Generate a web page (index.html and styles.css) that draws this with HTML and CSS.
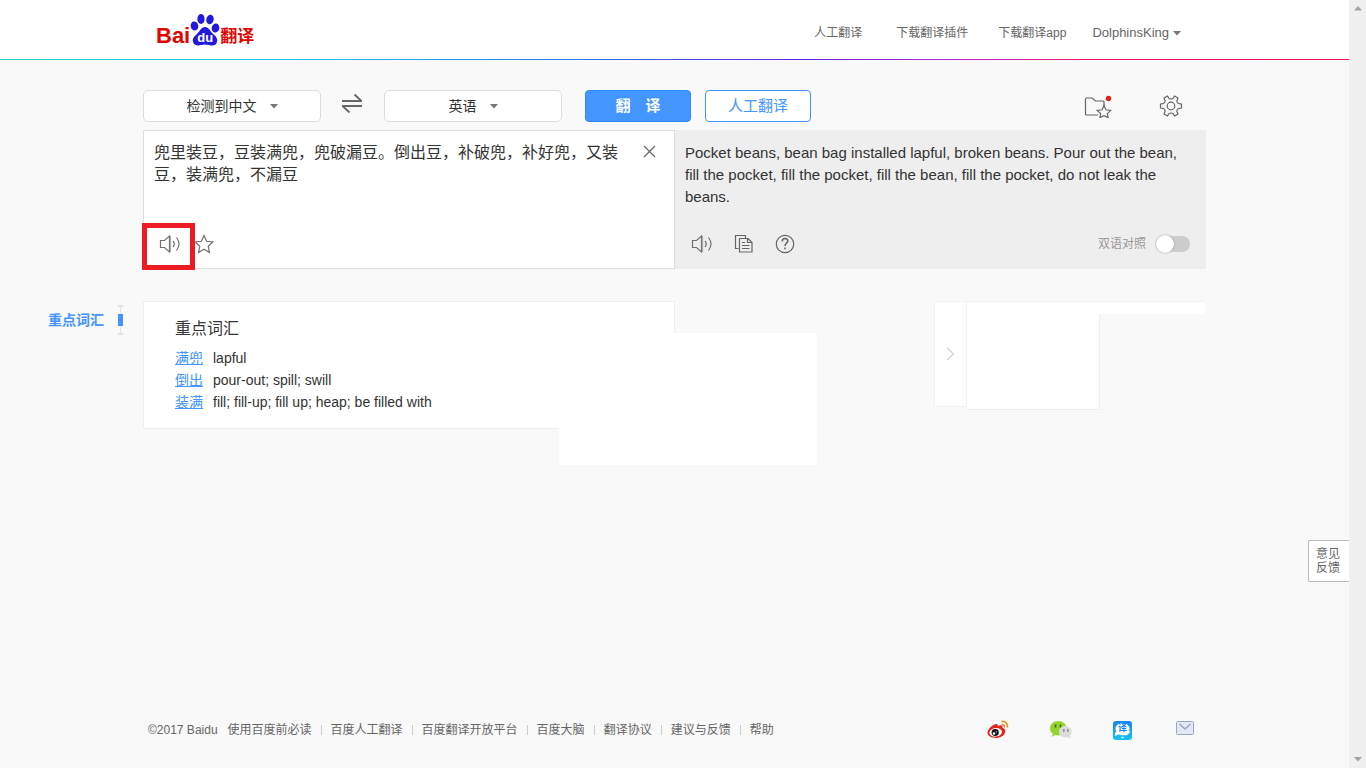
FILE: index.html
```html
<!DOCTYPE html>
<html lang="zh-CN">
<head>
<meta charset="utf-8">
<title>百度翻译</title>
<link rel="stylesheet" href="styles.css">
</head>
<body>
<div class="window">
  <div class="page">
    <header class="header">
      <div class="header-inner">
        <a class="logo" href="#" aria-label="Baidu翻译">
          <span class="logo-bai">Bai</span>
          <span class="logo-paw">
            <svg width="30" height="32" viewBox="0 0 30 32" fill="#2319dc"><ellipse cx="4.5" cy="12" rx="3.8" ry="4.5" transform="rotate(-12 4.500 12)"/><ellipse cx="11" cy="5" rx="3.6" ry="5"/><ellipse cx="20" cy="5.500" rx="3.700" ry="4.800" transform="rotate(12 20 5.500)"/><ellipse cx="25.500" cy="14" rx="3.800" ry="4.500" transform="rotate(10 25.500 14)"/><path d="M15 13c4 0 5 4 8 7 3 2 5 5 4 8-1 4-5 4-8 3-3-.7-5-.7-8 0-3 .8-7 .6-8-3-1-4 2-6 4-8 3-3 4-7 8-7z"/></svg>
            <span class="logo-du">du</span>
          </span>
          <span class="logo-cn">翻译</span>
        </a>
        <nav class="nav">
          <a class="nav-human" href="#">人工翻译</a>
          <a class="nav-plugin" href="#">下载翻译插件</a>
          <a class="nav-app" href="#">下载翻译app</a>
          <a class="nav-user" href="#">DolphinsKing <svg class="caret" width="8" height="5" viewBox="0 0 8 5"><path d="M0 0h8L4 4.500z"/></svg></a>
        </nav>
      </div>
    </header>

    <main class="main">
      <div class="toolbar">
        <label class="lang"><select aria-label="源语言"><option>检测到中文</option></select><svg class="caret" width="8" height="5" viewBox="0 0 8 5"><path d="M0 0h8L4 4.500z"/></svg></label>
        <button class="icon-btn swap" aria-label="交换语言"><svg width="22" height="20" viewBox="0 0 22 20" fill="none" stroke="#666" stroke-width="1.800"><path d="M1 8h20M13.500 1.500l7 6.500M1 13h20M8.500 19.500l-7-6.500"/></svg></button>
        <label class="lang"><select aria-label="目标语言"><option>英语</option></select><svg class="caret" width="8" height="5" viewBox="0 0 8 5"><path d="M0 0h8L4 4.500z"/></svg></label>
        <button class="btn btn-primary">翻　译</button>
        <button class="btn btn-outline">人工翻译</button>
        <div class="tools">
          <button class="icon-btn" aria-label="收藏夹"><svg width="28" height="24" viewBox="0 0 28 24" fill="none" stroke="#666" stroke-width="1.200"><path d="M14 21H2.500Q1.500 21 1.500 20V5Q1.500 4 2.500 4H8l3.500 3H19q1 0 1 1v4"/><path d="M20 11.500l2 4.300 4.800.6-3.500 3.200.9 4-4.200-2-4.200 2 .9-4-3.500-3.200 4.800-.6z" fill="#f9f9f9"/><circle cx="24.500" cy="4.500" r="2.700" fill="#e4211f" stroke="none"/></svg></button>
          <button class="icon-btn" aria-label="设置"><svg width="24" height="24" viewBox="0 0 24 24" fill="none" stroke="#666" stroke-width="1.200" stroke-linejoin="round"><circle cx="12" cy="12" r="3.800"/><path d="M10 4.500Q12 5.500 14 4.500L15.500 2l3.500 2-1.200 3Q18 9 20 9.700l2.500.3v4l-2.500.3Q18 15 17.800 17l1.200 3-3.500 2-1.500-2.500Q12 18.500 10 19.500L8.500 22 5 20l1.200-3Q6 15 4 14.300L1.500 14v-4L4 9.700Q6 9 6.200 7L5 4l3.500-2z"/></svg></button>
        </div>
      </div>

      <div class="panels">
        <section class="source">
          <div class="source-top">
            <textarea class="source-text" aria-label="原文" spellcheck="false">兜里装豆，豆装满兜，兜破漏豆。倒出豆，补破兜，补好兜，又装豆，装满兜，不漏豆</textarea>
            <button class="icon-btn close" aria-label="清空"><svg width="13" height="13" viewBox="0 0 13 13" stroke="#666" stroke-width="1.200"><path d="M1 1l11 11M12 1L1 12"/></svg></button>
          </div>
          <div class="actions">
            <button class="icon-btn marked" aria-label="朗读原文"><svg width="22" height="20" viewBox="0 0 22 20" fill="none" stroke="#707070" stroke-width="1.200"><path d="M1.500 6.500h4l5-4.500v16l-5-4.500h-4z"/><path d="M11.500 2v16" stroke="#aaa"/><path d="M14 7q2.500 3 0 6M17.500 3.500q5 6.500 0 13"/></svg></button>
            <button class="icon-btn star" aria-label="收藏"><svg width="20" height="20" viewBox="0 0 20 20" fill="none" stroke="#707070" stroke-width="1.200"><path d="M10 1.500l2.600 5.800 6.200.7-4.600 4.200 1.300 6.300-5.500-3.200-5.500 3.200 1.300-6.300L1.200 8l6.200-.7z"/></svg></button>
          </div>
        </section>
        <section class="target">
          <p class="target-text">Pocket beans, bean bag installed lapful, broken beans. Pour out the bean, fill the pocket, fill the pocket, fill the bean, fill the pocket, do not leak the beans.</p>
          <div class="actions target-actions">
            <button class="icon-btn" aria-label="朗读译文"><svg width="22" height="20" viewBox="0 0 22 20" fill="none" stroke="#707070" stroke-width="1.200"><path d="M1.500 6.500h4l5-4.500v16l-5-4.500h-4z"/><path d="M11.500 2v16" stroke="#aaa"/><path d="M14 7q2.500 3 0 6M17.500 3.500q5 6.500 0 13"/></svg></button>
            <button class="icon-btn" aria-label="复制"><svg width="20" height="20" viewBox="0 0 20 20" fill="none" stroke="#666" stroke-width="1.200"><path d="M4.500 14.500h-3v-13h10v2.500"/><path d="M5.500 4.500h8.500l4 4v9.500H5.500zM13.500 4.500v4h4.500M8 8.500h3M8 11.500h7.500M8 14.500h7.500"/></svg></button>
            <button class="icon-btn" aria-label="帮助"><svg width="20" height="20" viewBox="0 0 20 20" fill="none" stroke="#666" stroke-width="1.200"><circle cx="10" cy="10" r="8.700"/><path d="M7.200 7.500c0-4 5.800-3.800 5.600-.4C12.700 9 10 9.200 10 12M10 13.500v1.700" stroke-width="1.600"/></svg></button>
            <label class="switch">双语对照<input type="checkbox"></label>
          </div>
        </section>
      </div>
    </main>

    <div class="results">
      <nav class="side"><a href="#">重点词汇</a><span class="rail"></span></nav>
      <section class="words">
        <h2>重点词汇</h2>
        <dl>
          <dt><a href="#">满兜</a></dt><dd>lapful</dd>
          <dt><a href="#">倒出</a></dt><dd>pour-out; spill; swill</dd>
          <dt><a href="#">装满</a></dt><dd>fill; fill-up; fill up; heap; be filled with</dd>
        </dl>
        <div class="blank"></div>
      </section>
      <aside class="promo">
        <button class="promo-next" aria-label="展开"><svg width="9" height="14" viewBox="0 0 9 14" fill="none" stroke="#d5d5d5" stroke-width="1.400"><path d="M1 1l6.500 6L1 13"/></svg></button>
        <div class="promo-body"></div>
        <div class="promo-strip"></div>
      </aside>
    </div>

    <footer class="footer">
      <div class="links">
        <span class="copy">©2017 Baidu</span>
        <a href="#">使用百度前必读</a><a href="#">百度人工翻译</a><a href="#">百度翻译开放平台</a><a href="#">百度大脑</a><a href="#">翻译协议</a><a href="#">建议与反馈</a><a href="#">帮助</a>
      </div>
      <div class="social">
        <a href="#" aria-label="微博"><svg width="22" height="20" viewBox="0 0 22 20"><path d="M7.500 4.500c2-1 3.500-.7 3.300 1.500 3-1.500 5.500-1 4.700 1.800 2 .7 3.200 2 2.700 4.200C17.500 15.500 13.500 18 9 18s-8.500-2-8.500-5.200c0-3 3.500-6.800 7-8.300z" fill="#e1251f"/><ellipse cx="8.700" cy="12.300" rx="6.300" ry="4.300" fill="#fff" transform="rotate(-8 8.700 12.300)"/><ellipse cx="8.200" cy="12.500" rx="3.600" ry="3.400" fill="#111"/><circle cx="7" cy="13.500" r="1.300" fill="#fff"/><circle cx="9.300" cy="11.800" r=".6" fill="#fff"/><path d="M14.500 1.500c4-.8 6.500 2 5.800 6M14.500 4.500c2-.3 3.200 1 2.800 3" fill="none" stroke="#dc9128" stroke-width="1.600"/></svg></a>
        <a href="#" aria-label="微信"><svg width="24" height="20" viewBox="0 0 24 20"><path d="M8.500 1C3.500 1 0 4.200 0 8.200c0 2.400 1.200 4.300 3 5.500L1.500 17l4-1.900c5 1.400 11-1.600 11-6.900 0-4-3.500-7.200-8-7.200z" fill="#94d42c"/><path d="M5.500 4.500v3M10.500 4.500v3" stroke="#48691c" stroke-width="1.700"/><path d="M15.500 6C11.500 6 9 8.500 9 11.800c0 4 4 6.500 8.500 5.500l3.500 1.200-1-2.500c4-4.500.5-10-4.500-10z" fill="#dcdcdc"/><path d="M13.800 9v3M17.800 9v3" stroke="#8b8b8b" stroke-width="1.500"/></svg></a>
        <a href="#" aria-label="翻译应用"><span class="app"><svg width="19" height="19" viewBox="0 0 19 19"><defs><linearGradient id="sky" x2="0" y2="1"><stop stop-color="#1683f5"/><stop offset="1" stop-color="#16c4f2"/></linearGradient></defs><rect width="19" height="19" rx="3" fill="url(#sky)"/><ellipse cx="9.500" cy="8" rx="7" ry="6.300" fill="#fff"/><path d="M12 14q4-.5 4.500-4M3 11l-.5 3 4-1.500" fill="#fff" stroke="#fff" stroke-width="1.200"/><path d="M8 16.500h3" stroke="#bdf1ff" stroke-width="1.500"/></svg><span class="app-char">译</span></span></a>
        <a class="mail" href="#" aria-label="邮箱"><svg width="18" height="14" viewBox="0 0 18 14" fill="#e1e8f8" stroke="#9aa6bf"><rect x=".5" y=".5" width="17" height="13" rx="1"/><path d="M3.500 3l5.500 5 5.500-5" fill="none" stroke-width="1.600"/></svg></a>
      </div>
    </footer>

    <button class="feedback">意见<br>反馈</button>
  </div>
  <div class="scrollbar">
    <svg class="scroll-arrow" width="8" height="5" viewBox="0 0 8 5"><path d="M0 4.500h8L4 0z"/></svg>
    <svg class="scroll-arrow" width="8" height="5" viewBox="0 0 8 5"><path d="M0 0h8L4 4.500z"/></svg>
  </div>
</div>
</body>
</html>
```

FILE: styles.css
```css
* { box-sizing: border-box; }

body {
  margin: 0;
  background: #f9f9f9;
  color: #333;
  font: 14px/22px "Liberation Sans", Arial, "Noto Sans CJK SC", sans-serif;
}

a { color: inherit; text-decoration: none; }
button, select, textarea { font: inherit; color: inherit; }
svg { display: block; flex: none; }

.window { display: flex; min-height: 100vh; }
.page { position: relative; flex: 1; min-width: 0; display: flex; flex-direction: column; }

.scrollbar {
  width: 17px;
  padding: 6px 0;
  background: #f0f0f0;
  display: flex;
  flex-direction: column;
  align-items: center;
  justify-content: space-between;
}
.scroll-arrow { fill: #a3a3a3; }
.caret { fill: #777; }

/* header */
.header {
  height: 60px;
  background: #fff;
  border-bottom: 1px solid;
  border-image: linear-gradient(90deg, #1fd6c8, #1acbe8 20%, #2a6df0 45%, #6a20e0 60%, #b32ad8 70%, #ee1278 80%, #ee1260) 1;
}
.header-inner {
  width: 100%;
  max-width: 1063px;
  height: 100%;
  margin: 0 auto;
  padding: 0 25px 0 13px;
  display: flex;
  justify-content: space-between;
}
.logo { display: flex; padding-top: 14px; color: #e10601; font-weight: bold; }
.logo-bai { padding-top: 11px; font-size: 22px; line-height: 22px; }
.logo-paw { position: relative; }
.logo-du {
  position: absolute;
  left: 0;
  right: 0;
  top: 17px;
  color: #fff;
  font-size: 13px;
  line-height: 13px;
  text-align: center;
}
.logo-cn { padding-top: 12px; font-size: 17px; line-height: 22px; }
.nav { display: flex; padding-top: 22px; font-size: 12px; color: #666; }
.nav-human { margin-right: 34px; }
.nav-plugin { margin-right: 30px; }
.nav-app { margin-right: 26px; }
.nav-user { display: flex; align-items: center; gap: 4px; height: 22px; font-size: 13px; }

/* toolbar */
.main { width: 100%; max-width: 1063px; margin: 30px auto 0; }
.toolbar { display: flex; align-items: center; height: 32px; }
.lang {
  width: 178px;
  height: 32px;
  display: flex;
  align-items: center;
  justify-content: center;
  gap: 13px;
  background: #fff;
  border: 1px solid #dcdcdc;
  border-radius: 5px;
}
.lang select { appearance: none; border: 0; padding: 0; background: none; }
.icon-btn { display: flex; padding: 0; border: 0; background: none; }
.swap { margin: 0 21px 6px 20px; }
.btn {
  width: 106px;
  height: 32px;
  padding: 0;
  border: 1px solid #4395ff;
  border-radius: 4px;
  font-size: 15px;
}
.btn-primary { margin-left: 23px; background: #4395ff; border-color: #2f88f7; color: #fff; font-weight: bold; }
.btn-outline { margin-left: 14px; background: #fff; color: #4395ff; }
.tools { display: flex; gap: 47px; margin: 0 23px 0 auto; }

/* translation panels */
.panels { display: grid; grid-template-columns: 532fr 531fr; min-height: 139px; margin-top: 8px; }
.source, .target { display: flex; flex-direction: column; }
.source { padding: 11px 16px 9px 10px; background: #fff; border: 1px solid #dcdcdc; }
.source-top { display: flex; align-items: flex-start; gap: 20px; }
.source-text {
  flex: 1;
  height: 66px;
  padding: 0;
  border: 0;
  outline: 0;
  resize: none;
  overflow: hidden;
  background: none;
  font-size: 16px;
  line-height: 22px;
}
.close { margin: 3px 2px 0 0; }
.actions { display: flex; align-items: center; margin-top: auto; height: 30px; }
.marked { position: relative; margin-left: 5px; }
.marked::after {
  content: "";
  position: absolute;
  inset: -11px -14px -16px -17px;
  border: 5px solid #ed1c24;
}
.star { margin-left: 13px; }
.target { padding: 12px 10px 10px; background: #eee; }
.target-text { margin: 0; padding-right: 6px; font-size: 15px; line-height: 22px; }
.target-actions { gap: 21px; padding: 0 6px; }
.switch { display: flex; align-items: center; gap: 10px; margin-left: auto; font-size: 12px; color: #999; }
.switch input {
  appearance: none;
  display: flex;
  align-items: center;
  width: 34px;
  height: 16px;
  margin: 0;
  border-radius: 8px;
  background: #ccc;
}
.switch input::before {
  content: "";
  width: 18px;
  height: 18px;
  border-radius: 50%;
  background: #fff;
  box-shadow: 0 0 2px #888;
}

/* results */
.results {
  display: grid;
  grid-template-columns: 1fr minmax(0, 532px) minmax(0, 531px) 1fr;
  align-items: start;
  margin-top: 32px;
}
.side {
  display: flex;
  align-items: center;
  justify-content: flex-end;
  gap: 14px;
  padding: 4px 20px 0 0;
  color: #4395ff;
  font-weight: bold;
}
.rail {
  width: 5px;
  height: 30px;
  background: linear-gradient(#4395ff, #4395ff) center / 5px 12px no-repeat, linear-gradient(#e5dfe0, #e5dfe0) center / 1px 30px no-repeat;
  border: solid #e5dfe0;
  border-width: 2px 0;
}
.words {
  position: relative;
  min-height: 128px;
  padding: 16px 31px 14px;
  background: #fff;
  border: 1px solid #eee;
}
.words h2 { margin: 0 0 7px; font-size: 16px; line-height: 22px; font-weight: normal; }
.words dl { margin: 0; display: grid; grid-template-columns: 28px 1fr; column-gap: 10px; }
.words dd { margin: 0; }
.words dt a { color: #4395ff; text-decoration: underline; }
.blank { position: absolute; left: 415px; top: 31px; width: 258px; height: 132px; background: #fff; }
.promo {
  display: grid;
  grid-template-columns: 33px 133px 1fr;
  align-items: start;
  margin: 0 0 0 259px;
  padding: 0 1px 0 0;
}
.promo-next {
  height: 106px;
  padding: 0;
  display: flex;
  align-items: center;
  justify-content: center;
  background: #fff;
  border: 1px solid #f3f3f3;
}
.promo-body { height: 109px; background: #fff; border: solid #eee; border-width: 0 1px 1px 0; border-top: 1px solid #f3f3f3; }
.promo-strip { height: 13px; background: #fff; border-top: 1px solid #f3f3f3; margin-left: -1px; }

/* footer */
.footer {
  width: 100%;
  max-width: 1063px;
  margin: auto auto 0;
  padding: 0 12px 27px 5px;
  display: flex;
  justify-content: space-between;
  align-items: center;
  color: #666;
  font-size: 12px;
}
.links { display: flex; align-items: center; }
.copy { margin-right: 10px; }
.links a + a { display: flex; align-items: center; }
.links a + a::before { content: ""; width: 1px; height: 10px; margin: 0 9px; background: #ccc; }
.social { display: grid; grid-template-columns: repeat(3, 63px) 18px; align-items: center; }
.mail { margin-bottom: 4px; }
.app { position: relative; display: block; width: 19px; }
.app-char {
  position: absolute;
  left: 0;
  right: 0;
  top: 2px;
  font-size: 9px;
  line-height: 11px;
  text-align: center;
  font-weight: bold;
  color: #1683f5;
}

.feedback {
  position: absolute;
  right: 0;
  top: 540px;
  width: 41px;
  height: 42px;
  padding: 0 2px 0 0;
  border: 1px solid #bbb;
  border-right: 0;
  border-radius: 2px 0 0 2px;
  background: #fff;
  color: #666;
  font-size: 12px;
  line-height: 14px;
}
```
